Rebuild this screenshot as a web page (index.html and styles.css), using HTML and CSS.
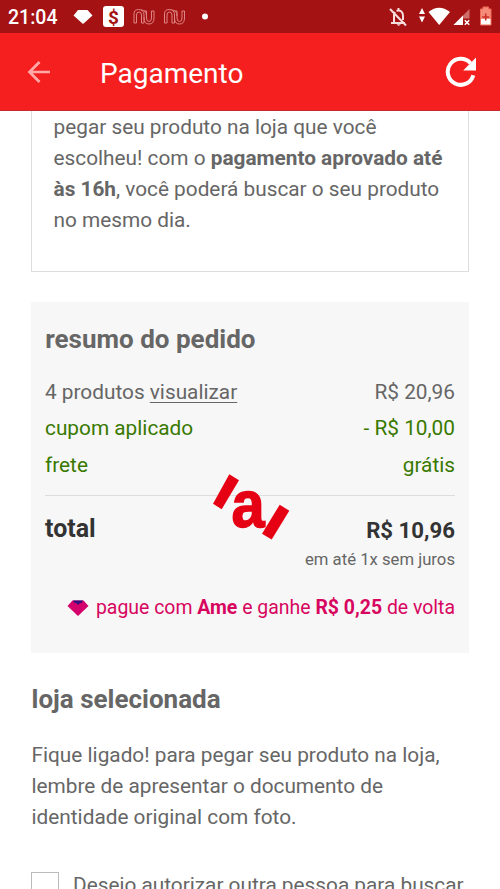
FILE: index.html
```html
<!DOCTYPE html>
<html lang="pt-BR">
<head>
<meta charset="utf-8">
<title>Pagamento</title>
<link rel="stylesheet" href="styles.css">
</head>
<body>
<div class="screen">
  <div class="status">
    <span class="clock">21:04</span>
    <svg class="status-icons" width="442" height="33" viewBox="58 0 442 33">
      <path d="M78 10H87.500L92.500 15.500L83 24L73.500 15.500Z" fill="#fff"/>
      <rect x="103" y="6" width="21" height="21" rx="3" fill="#fff"/>
      <text class="coin" x="113.500" y="23.500" text-anchor="middle">$</text>
      <g fill="none" stroke="#df8583" stroke-width="1">
        <g id="nu">
          <path d="M134 23V14Q134 9.500 138.500 9.500Q144 9.500 144 15V18Q144 24 149 24Q154 24 154 18V11H151.500V18Q151.500 21.500 149 21.500Q146.500 21.500 146.500 18V11H144"/>
          <path d="M136.500 23V15Q136.500 12 139 12Q141.500 12 141.500 15V23H144V17M134 23H136.500M141 10Q146.500 10 146.500 16"/>
        </g>
        <use href="#nu" x="30.500"/>
      </g>
      <circle cx="205" cy="16.500" r="3" fill="#fff"/>
      <path d="M391 23H405M394 22V16Q394 13.500 395 12M396.500 10.800Q403 9.500 403 16V20M398.500 8V10.500M390 9L406 25.500" fill="none" stroke="#f7dedd" stroke-width="2"/>
      <path d="M396.500 24.200H401L398.700 26Z" fill="#f7dedd"/>
      <path d="M419 14L422 8L425 14ZM419 16.500H425L422 22.500Z" fill="#fff"/>
      <path d="M428.500 12Q439 3.500 450 12L439.200 25Z" fill="#fff"/>
      <path d="M469.500 9V18.500H463V25H453.500Z" fill="#cf6d6b"/>
      <path d="M463 15.500V25H453.500Z" fill="#fff"/>
      <path d="M464.800 20.200L469.200 24.800M469.200 20.200L464.800 24.800" stroke="#fff" stroke-width="1.500"/>
      <path d="M480.500 9H483V7H488.500V9H491V19H480.500Z" fill="#f58b78"/>
      <path d="M480.500 19H491V25H480.500Z" fill="#fff"/>
      <path d="M480.500 9H483V7H488.500V9H491V25H480.500Z" fill="none" stroke="#f06c59"/>
      <path d="M485.700 13.500V20.500M482.200 17H489.200" stroke="#c92f27" stroke-width="1.500"/>
    </svg>
  </div>
  <header class="bar">
    <svg class="back" width="24" height="24" viewBox="0 0 24 24"><path d="M12.500 2L2.500 12L12.500 22M2.500 12H23" fill="none" stroke="#ffaaa8" stroke-width="2.700"/></svg>
    <h1 class="title">Pagamento</h1>
    <svg class="reload" width="32" height="32" viewBox="0 0 32 32"><path d="M25.500 7.200A13 13 0 1 0 28.300 19.200" fill="none" stroke="#fff" stroke-width="4"/><path d="M31 1.500V14.500H18.200Z" fill="#fff"/></svg>
  </header>
  <main class="content">
    <section class="notice">pegar seu produto na loja que você<br>escolheu! com o <b>pagamento aprovado até<br>às 16h</b>, você poderá buscar o seu produto<br>no mesmo dia.</section>
    <section class="summary">
      <h2 class="heading">resumo do pedido</h2>
      <div class="row first"><span>4 produtos <a class="link">visualizar</a></span><span>R$ 20,96</span></div>
      <div class="row green"><span>cupom aplicado</span><span>- R$ 10,00</span></div>
      <div class="row green"><span>frete</span><span>grátis</span></div>
      <div class="total"><b class="total-label">total</b><b class="price">R$ 10,96</b></div>
      <div class="terms">em até 1x sem juros</div>
      <div class="ame">
        <svg width="22" height="16" viewBox="0 0 22 16"><path d="M5.500 .5H16.500L21.500 6L11 16L.5 6Z" fill="#d4006b"/><path d="M6 .5H16L14.500 3H13L11 5L9 3H7.500Z" fill="#37107f"/></svg>
        <span>pague com <b>Ame</b> e ganhe <b>R$ 0,25</b> de volta</span>
      </div>
      <svg class="loader" width="80" height="70" viewBox="0 0 80 70"><path d="M18.300 2.300L28 8.200L10.700 37.300L2 31.700ZM68.700 32.700L78.300 38.700L60.700 67.500L51 61.700Z" fill="#e60014"/><text class="loader-a" transform="translate(20.500 54.700) scale(.89 1)">a</text></svg>
    </section>
    <h2 class="heading store">loja selecionada</h2>
    <p class="copy">Fique ligado! para pegar seu produto na loja,<br>lembre de apresentar o documento de<br>identidade original com foto.</p>
    <div class="authorize"><span class="box"></span><span>Desejo autorizar outra pessoa para buscar</span></div>
  </main>
</div>
</body>
</html>
```
FILE: styles.css
```css
* { box-sizing: border-box; }
body { margin: 0; background: #fff; color: #666; font: 20.8px/31px Roboto, sans-serif; }
.screen { width: 500px; height: 889px; overflow: hidden; white-space: nowrap; }
.status { display: flex; height: 33px; background: #a51214; color: #fff; }
.clock { width: 58px; padding-left: 8px; font-size: 19.500px; line-height: 35px; font-weight: 500; }
.status-icons { display: block; }
.coin { font: 700 19px Roboto, sans-serif; fill: #a51214; }
.bar { display: flex; align-items: center; height: 78px; padding: 0 23px 0 27px; background: #f61f20; border-bottom: 1px solid #c72b2d; }
.title { flex: 1; margin: 0 0 0 49px; color: #fff; font-size: 28px; line-height: 36px; font-weight: 400; padding-top: 4px; }
.content { padding: 0 31px; }
.notice { height: 161px; padding: 1px 21.500px; border: solid #ddd; border-width: 0 1px 1px; }
.summary { position: relative; height: 351px; margin-top: 30px; padding: 22px 14px 0; background: #f7f7f7; }
.heading { margin: 0; font-size: 26px; line-height: 31px; font-weight: 700; }
.summary .heading { padding-left: .3px; }
.row { display: flex; justify-content: space-between; line-height: 36.500px; }
.first { margin-top: 18.600px; }
.link { text-decoration: underline; text-decoration-thickness: 1px; text-underline-offset: 3px; }
.green { color: #397900; }
.total { display: flex; justify-content: space-between; height: 52px; margin-top: 12.400px; padding-top: 17px; border-top: 1px solid #ddd; color: #333; line-height: 32px; }
.total-label { font-size: 25px; }
.price { font-size: 22.200px; padding-top: 1px; }
.terms { text-align: right; font-size: 16.700px; line-height: 26px; }
.ame { display: flex; justify-content: flex-end; align-items: center; gap: 7px; margin-top: 19px; font-size: 19.450px; color: #d7065e; }
.loader { position: absolute; left: 180px; top: 170px; overflow: visible; }
.loader-a { font: 700 67px "Liberation Sans", sans-serif; fill: #e60014; stroke: #e60014; stroke-width: 1.500px; }
.store { margin-top: 31px; padding-left: .5px; }
.copy { margin: 25px 0 0; padding-left: .5px; }
.authorize { display: flex; gap: 14px; margin-top: 37px; }
.box { width: 28px; height: 28px; margin-top: 2px; border: 1px solid #bbb; }
```
